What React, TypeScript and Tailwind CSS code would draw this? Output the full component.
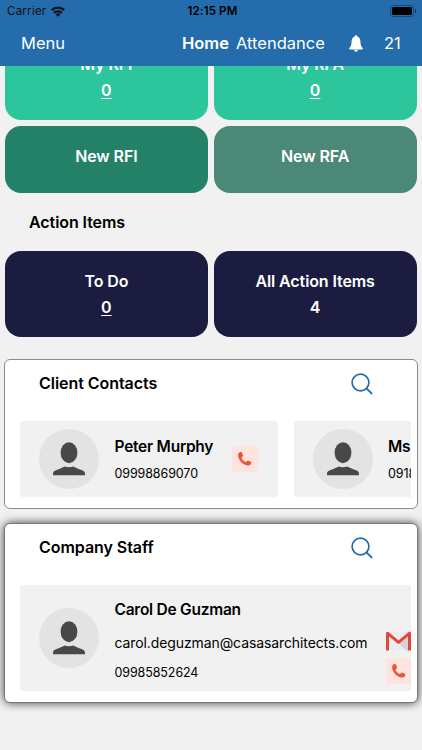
import type { ReactNode } from 'react';

interface TileProps {
  title: string;
  value?: string;
  underline?: boolean;
  className: string;
}

function Tile({ title, value, underline, className }: TileProps) {
  return (
    <div className={`flex-1 rounded-[16px] text-center text-[16px] leading-[26px] font-semibold text-white ${className}`}>
      <p className="tracking-[-0.1px]">{title}</p>
      {value && <p className={underline ? 'underline underline-offset-2 decoration-1' : ''}>{value}</p>}
    </div>
  );
}

function WifiIcon() {
  return (
    <svg width="14" height="11" viewBox="0 0 14 11" fill="none" stroke="#0b1218" strokeWidth="2.3">
      <path d="M0.8 4.100a8.800 8.800 0 0 1 12.400 0" />
      <path d="M3.100 6.900a5.500 5.500 0 0 1 7.800 0" />
      <path d="M7 10.800 4.700 8.500a3.200 3.200 0 0 1 4.600 0Z" fill="#0b1218" stroke="none" />
    </svg>
  );
}

function BatteryIcon() {
  return (
    <svg width="27" height="12" viewBox="0 0 27 12">
      <rect x="0.5" y="0.5" width="23" height="11" rx="2.6" fill="none" stroke="#164a78" />
      <rect x="2" y="2" width="20" height="8" rx="1.3" fill="#000" />
      <path d="M25 4v4c1.8-.8 1.8-3.2 0-4Z" fill="#0d3050" />
    </svg>
  );
}

function BellIcon() {
  return (
    <svg width="14" height="17" viewBox="0 0 14 17" fill="#fff">
      <path d="M7 0.300c.8 0 1.300.5 1.300 1.300 2 .6 3 2.300 3.100 4.600.1 3.700.8 5.500 2.300 6.900.3.4.1 1.300-.5 1.300H.8c-.6 0-.8-.9-.5-1.300 1.500-1.400 2.200-3.200 2.300-6.900.1-2.300 1.100-4 3.100-4.600 0-.8.5-1.300 1.300-1.300Z" />
      <path d="M5 14.800h4c-.2 1.200-1 1.900-2 1.900s-1.800-.7-2-1.900Z" />
    </svg>
  );
}

function SearchIcon() {
  return (
    <svg width="22" height="22" viewBox="0 0 22 22" fill="none" stroke="#246bab" strokeWidth="1.7">
      <circle cx="9.500" cy="9.500" r="8.400" />
      <path d="m15.400 15.400 5.700 5.500" strokeWidth="2" />
    </svg>
  );
}

function Avatar() {
  return (
    <div className="flex size-[60px] shrink-0 items-center justify-center rounded-full bg-[#e3e3e3]">
      <svg width="32" height="34" viewBox="0 0 32 34" fill="#484848">
        <ellipse cx="16" cy="10.700" rx="8.400" ry="10.500" />
        <path d="M0 33.200v-1.300c0-2.400 1.500-3.300 4.200-4.100 2.900-.9 5.800-2.600 7.600-3.200 2.200.7 6.200.7 8.400 0 1.800.6 4.700 2.300 7.600 3.200 2.700.8 4.200 1.700 4.200 4.100v1.300Z" />
      </svg>
    </div>
  );
}

function PhoneBadge() {
  return (
    <svg className="shrink-0" width="26" height="26" viewBox="0 0 26 26">
      <rect width="26" height="26" rx="3" fill="#ffe3df" />
      <path
        d="M7.300 6.500c1.200-.8 2.500-.5 3 .8l.6 1.700c.3.9-.1 1.600-.9 2.100-.5.4-.5.8-.2 1.400.8 1.500 1.900 2.600 3.300 3.300.6.3 1 .2 1.400-.3.6-.8 1.300-1 2.100-.7l1.700.7c1.200.5 1.300 1.800.4 2.900-.8.900-2 1.300-3.400 1-4.700-.9-8.200-4.600-9.100-8.900-.3-1.700.1-3.300 1.100-4Z"
        fill="#ee5538"
      />
    </svg>
  );
}

function GmailIcon() {
  return (
    <svg className="shrink-0" width="25" height="20" viewBox="0 0 25 20">
      <path d="M2 1h21v18.500H2Z" fill="#e9edf0" />
      <path d="M12.500 12 23 3v16.500h-3Z" fill="#cfd6da" />
      <path d="M1.500 19.500V2.200L12.500 11.400 23.500 2.200v17.300" fill="none" stroke="#e5473b" strokeWidth="3" strokeLinejoin="round" />
    </svg>
  );
}

function Card({ title, className, children }: { title: string; className: string; children: ReactNode }) {
  return (
    <section className={`mx-[4px] rounded-[6px] bg-white pr-[6px] pl-[15px] ${className}`}>
      <div className="flex h-[61px] items-start justify-between pt-[13px] pr-[38px] pl-[19px]">
        <h2 className="-mt-px text-[16px] leading-[22px] font-semibold tracking-[-0.050px]">{title}</h2>
        <SearchIcon />
      </div>
      {children}
    </section>
  );
}

// the second card runs past the right edge of the list
const CLIENTS = [
  { name: 'Peter Murphy', phone: '09998869070' },
  { name: 'Ms', phone: '0918' },
];

export default function App() {
  return (
    <div className="h-[750px] w-[422px] overflow-hidden bg-[#f1f1f1] font-[Inter,sans-serif] text-black">
      <header className="relative z-10 h-[65.500px] bg-[#246cac]">
        <div className="grid h-[22px] grid-cols-3 items-center px-[7px] text-[11.500px]">
          <div className="flex items-center gap-[5px] text-[#0b1218]">
            <span className="pt-[2px] tracking-[0.250px]">Carrier</span>
            <WifiIcon />
          </div>
          <span className="pt-[2px] pl-[3px] text-center font-semibold tracking-[0.150px]">12:15 PM</span>
          <div className="-mr-[2px] flex justify-end">
            <BatteryIcon />
          </div>
        </div>
        <nav className="flex h-[42px] items-center pl-[21px] text-[16.500px] text-white">
          <span className="w-[161px]">Menu</span>
          <span className="w-[54px] font-semibold">Home</span>
          <span className="w-[113px]">Attendance</span>
          <BellIcon />
          <span className="ml-[21px]">21</span>
        </nav>
      </header>

      <main>
        <div className="-mt-[19.500px] flex gap-[6px] pr-[5.500px] pl-[5px]">
          <Tile title="My RFI" value="0" underline className="h-[74px] bg-[#2dc59b] pt-[5px]" />
          <Tile title="My RFA" value="0" underline className="h-[74px] bg-[#2dc59b] pt-[5px]" />
        </div>
        <div className="mt-[6px] flex gap-[6px] pr-[5.500px] pl-[5px]">
          <Tile title="New RFI" className="h-[66.500px] bg-[#238167] pt-[17px]" />
          <Tile title="New RFA" className="h-[66.500px] bg-[#4b8877] pt-[17px]" />
        </div>

        <h2 className="mt-[16.500px] pl-[29px] text-[16px] leading-[26px] font-semibold tracking-[-0.080px]">Action Items</h2>
        <div className="mt-[16px] flex gap-[6px] pr-[5.500px] pl-[5px]">
          <Tile title="To Do" value="0" underline className="h-[86px] bg-[#1b1c40] pt-[17px]" />
          <Tile title="All Action Items" value="4" className="h-[86px] bg-[#1b1c40] pt-[17px]" />
        </div>

        <Card title="Client Contacts" className="mt-[21.500px] h-[150px] border border-[#8b8b8b]">
          <div className="flex gap-[16px] overflow-hidden">
            {CLIENTS.map(c => (
              <div key={c.name} className="flex h-[76px] w-[257.500px] shrink-0 items-center rounded-[3px] bg-[#f1f1f1] pr-[20px] pl-[19px]">
                <Avatar />
                <div className="ml-[15.500px] flex-1 pt-[3px] whitespace-nowrap">
                  <p className="text-[15.500px] leading-[24px] font-semibold tracking-[-0.250px]">{c.name}</p>
                  <p className="mt-[3px] text-[12.500px] leading-[24px] tracking-[-0.100px]">{c.phone}</p>
                </div>
                <PhoneBadge />
              </div>
            ))}
          </div>
        </Card>

        <Card
          title="Company Staff"
          className="mt-[14.500px] h-[180px] border border-[#777] shadow-[0_0_10px_rgba(0,0,0,0.75)]"
        >
          <div className="flex h-[106px] items-center rounded-l-[3px] bg-[#f1f1f1] pl-[19px]">
            <Avatar />
            <div className="ml-[15.500px] flex-1 pt-[7px] whitespace-nowrap">
              <p className="text-[15.500px] leading-[24px] font-semibold tracking-[-0.250px]">Carol De Guzman</p>
              <p className="mt-[9px] text-[14px] leading-[24px] tracking-[-0.100px]">carol.deguzman@casasarchitects.com</p>
              <p className="mt-[6px] text-[12.500px] leading-[24px] tracking-[-0.100px]">09985852624</p>
            </div>
            <div className="flex w-[25px] flex-col gap-[7px] overflow-hidden pt-[39px]">
              <GmailIcon />
              <PhoneBadge />
            </div>
          </div>
        </Card>
      </main>
    </div>
  );
}
